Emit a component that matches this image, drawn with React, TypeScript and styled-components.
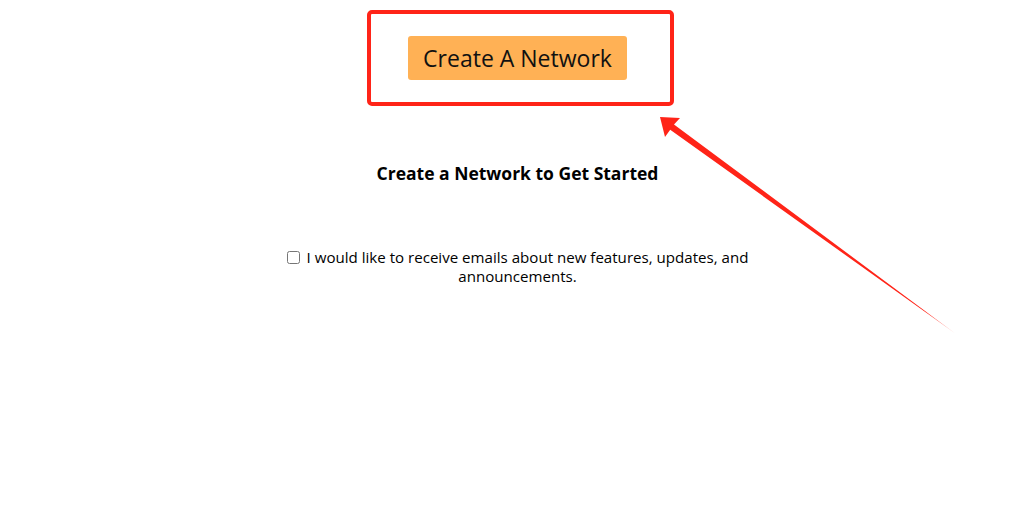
import styled, { createGlobalStyle } from "styled-components";

const GlobalStyle = createGlobalStyle`
    html, body {
        margin: 0;
        padding: 0;
        background: #ffffff;
    }
    body {
        font-family: "Open Sans", "Noto Sans", "Liberation Sans", sans-serif;
        color: #000000;
    }
`;

const App = () => {
    return (
        <Page>
            <GlobalStyle />
            <Main>
                {/* 스크린샷 강조 박스 */}
                <Highlight>
                    <CreateButton type="button">Create A Network</CreateButton>
                </Highlight>
                <Heading>Create a Network to Get Started</Heading>
                <Consent>
                    <Checkbox type="checkbox" />
                    I would like to receive emails about new features, updates,
                    and announcements.
                </Consent>
            </Main>
            <Arrow width="1017" height="532" viewBox="0 0 1017 532">
                <defs>
                    <linearGradient
                        id="arrowFade"
                        x1="660"
                        y1="117"
                        x2="953"
                        y2="332"
                        gradientUnits="userSpaceOnUse"
                    >
                        <stop offset="0" stopColor="#ff2418" />
                        <stop offset="0.9" stopColor="#ff2418" />
                        <stop offset="1" stopColor="#ff2418" stopOpacity="0.4" />
                    </linearGradient>
                </defs>
                <polygon
                    points="660,117 680,118 674,124.4 956,334 670.2,129.8 665,137"
                    fill="url(#arrowFade)"
                />
            </Arrow>
        </Page>
    );
};

export default App;

const Page = styled.div`
    position: relative;
    width: 1017px;
    height: 532px;
    overflow: hidden;
`;

const Main = styled.main`
    display: flex;
    flex-direction: column;
    align-items: center;
    padding: 10px 0 0 18px;
    box-sizing: border-box;
`;

const Highlight = styled.div`
    display: flex;
    border: 4px solid #ff2418;
    border-radius: 5px;
    padding: 22px 43px 22px 37px;
    margin-left: 6px;
`;

const CreateButton = styled.button`
    height: 44px;
    width: 219px;
    border: none;
    border-radius: 3px;
    background-color: #ffb155;
    color: #111111;
    font-family: inherit;
    font-size: 23px;
    padding: 0;
    cursor: pointer;
`;

const Heading = styled.h2`
    margin: 55px 0 0;
    font-size: 17.5px;
    font-weight: 700;
    line-height: 24px;
`;

const Consent = styled.label`
    display: block;
    width: 480px;
    margin-top: 63px;
    text-align: center;
    font-size: 15.1px;
    line-height: 19px;
`;

const Checkbox = styled.input`
    width: 13px;
    height: 13px;
    margin: 0 7px 0 0;
    vertical-align: -1px;
`;

const Arrow = styled.svg`
    position: absolute;
    left: 0;
    top: 0;
    pointer-events: none;
`;
